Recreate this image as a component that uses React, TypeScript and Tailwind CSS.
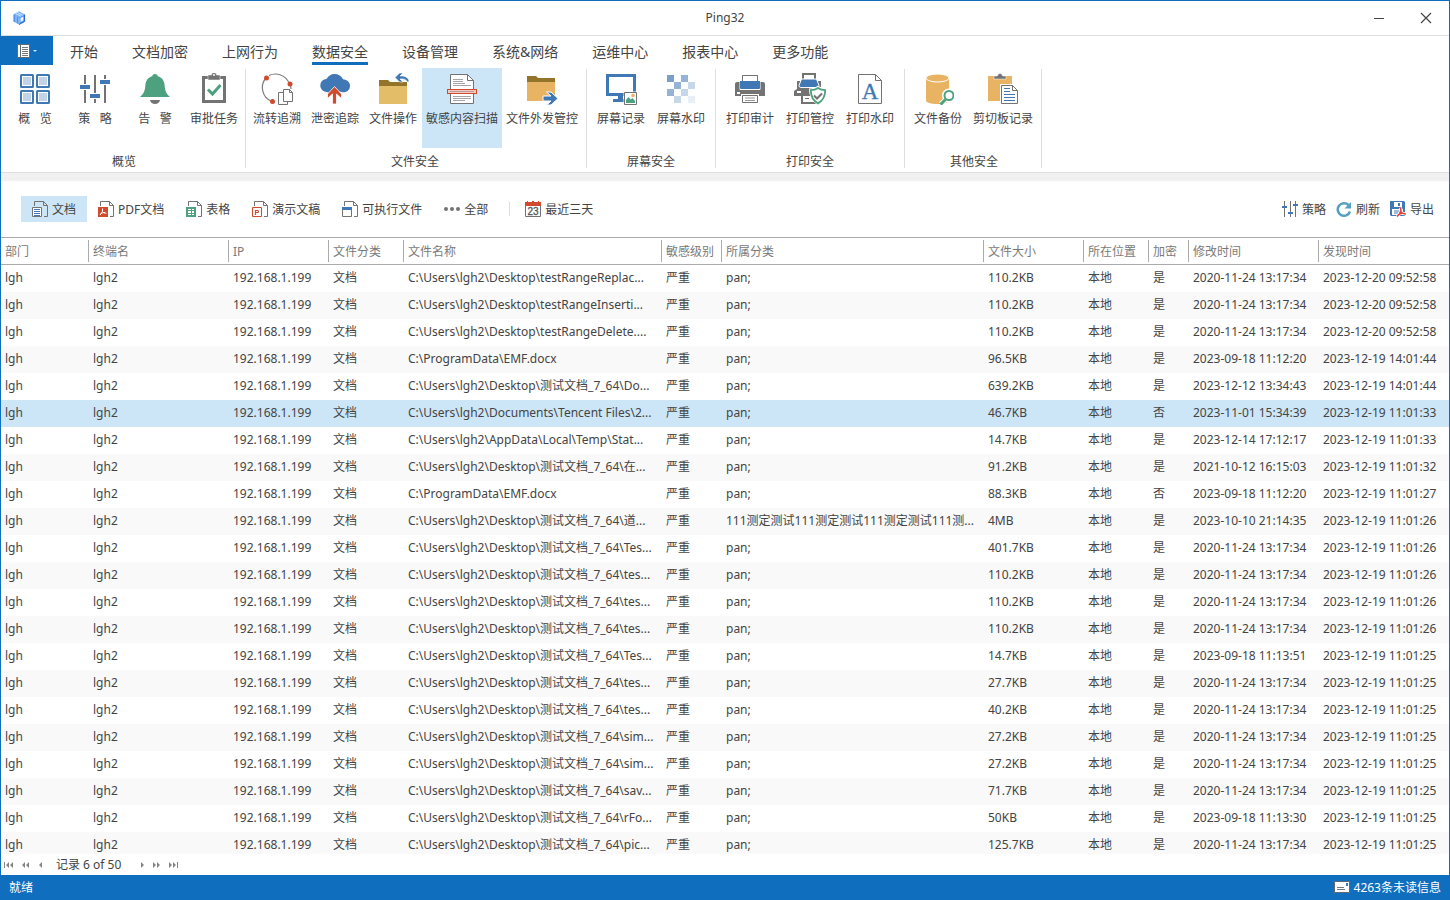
import type { ReactNode } from 'react';

const BLUE = '#3f78b4';
const GRAY = '#737373';
const GREEN = '#4ea17e';
const RED = '#d04a2e';
const SAND = '#e8b464';

/* ---------- ribbon icons, 32x32 ---------- */

const Big = ({ children }: { children: ReactNode }) => (
    <svg viewBox="0 0 32 32" className="size-8 shrink-0" fill="none" aria-hidden="true">{children}</svg>
);

const OverviewIcon = () => (
    <Big>
        {[[1, 1], [17, 1], [1, 17], [17, 17]].map(([x, y]) => (
            <g key={`${x}-${y}`}>
                <rect x={x + 1} y={y + 1} width="12" height="12" rx="0.5" stroke={BLUE} strokeWidth="2" fill="#fff" />
                <rect x={x + 3} y={y + 3} width="8" height="8" fill="#c3d3e6" />
            </g>
        ))}
    </Big>
);

const PolicyIcon = () => (
    <Big>
        <path d="M6 2v28M16 2v28M26 2v28" stroke={GRAY} strokeWidth="2" />
        <path d="M1 11h10v6H1zM11 20h10v6H11zM21 6h10v6H21z" fill="#fff" />
        <path d="M1 12h10v4H1zM11 21h10v4H11zM21 7h10v4H21z" fill={BLUE} />
    </Big>
);

const AlarmIcon = () => (
    <Big>
        <path d="M16 1c1.500 0 2.500.800 2.800 2.200C23.500 4.600 25.300 8 25.600 12c.3 6 2 9 5.400 12H1c3.400-3 5.100-6 5.400-12 .3-4 2.100-7.400 6.800-8.800C13.500 1.800 14.500 1 16 1z" fill={GREEN} />
        <path d="M11 27h10c-.5 2.500-2.500 4-5 4s-4.500-1.500-5-4z" fill={GRAY} />
    </Big>
);

const TaskIcon = () => (
    <Big>
        <path d="M5.500 4.500h21v24h-21z" stroke={GRAY} strokeWidth="3" />
        <path d="M10 2h3.500a2.500 2.500 0 0 1 5 0H22v5H10z" fill={GRAY} stroke="#fff" strokeWidth="0.500" />
        <circle cx="16" cy="2" r="1" fill="#fff" />
        <path d="M10 16.500l4.500 4.500 8-9" stroke={GREEN} strokeWidth="3" />
    </Big>
);

const FlowIcon = () => (
    <Big>
        <path d="M11 28.500A14.800 14.800 0 0 1 5 5M8 2.500A14.800 14.800 0 0 1 28 10M29.500 13q.5 1.500.5 3" stroke="#7d7d7d" strokeWidth="1.200" />
        <circle cx="5.500" cy="5" r="2.500" fill={RED} />
        <circle cx="29" cy="11" r="2.500" fill={RED} />
        <circle cx="11.500" cy="28.500" r="2.500" fill={RED} />
        <path d="M17.500 19.500h9v12h-9z" fill="#fff" stroke={GRAY} />
        <path d="M22.500 16.500h6l3 3v9h-9z" fill="#fff" stroke={GRAY} />
        <path d="M28.500 16.500v3h3" stroke={GRAY} />
    </Big>
);

const CloudIcon = () => (
    <Big>
        <path d="M8 19a6.500 6.500 0 0 1-.5-13C9 3 12 1 15.500 1c4 0 7 2 8.500 5.200 4 .3 7 3 7 6.500 0 3.800-2.800 6.600-6.500 6.600-1.500 0-2.500-.3-3.500-.8-2.500 1.800-8 2.500-13 .5z" fill={BLUE} />
        <path d="M15.500 13.500l7 7.500v4.500l-5-4.500V31h-4V21l-5 4.500V21z" fill={RED} stroke="#fff" strokeWidth="0.800" />
    </Big>
);

const FolderOpIcon = () => (
    <Big>
        <path d="M2 7h9l2 2h17v4H2z" fill="#937428" />
        <path d="M2 13h28v18H2z" fill="#e4bd68" />
        <path d="M26 0h-3.500L18 4.500 22.500 9H26l-3-3c4-.5 6 .5 7.500 3H32c0-4-3.500-6.500-9-6z" fill={BLUE} stroke="#fff" strokeWidth="0.600" />
    </Big>
);

const ScanIcon = () => (
    <Big>
        <path d="M4.500 1.500h17l6 6v23h-23z" fill="#fff" stroke={GRAY} />
        <path d="M21.500 1.500v6h6" stroke={GRAY} />
        <path d="M7 6.500h10M7 8.500h10M7 10.500h12M7 12.500h18M7 23.500h18M7 25.500h18M7 27.500h12" stroke="#a5a5a5" />
        <rect x="1.500" y="16.500" width="29" height="4" fill="#f6c9c2" stroke={RED} />
        <path d="M4 18.500h24" stroke="#b89a98" />
    </Big>
);

const FolderOutIcon = () => (
    <Big>
        <path d="M1 3h9l2 2h17v4H1z" fill="#937428" />
        <path d="M1 9h28v19H1z" fill={SAND} />
        <path d="M17 23h8l-4.500-4h4.500l7 6.500-7 6.500h-4.500l4.500-4h-8z" fill={BLUE} stroke="#fff" strokeWidth="1" />
    </Big>
);

const ScreenIcon = () => (
    <Big>
        <path d="M2.500 2.500h27v19h-27z" fill="#fff" stroke={BLUE} strokeWidth="3" />
        <path d="M13 22h5v4h3v3H8v-3h5z" fill={BLUE} />
        <path d="M18.500 18.500h14v14h-14z" fill="#fff" />
        <path d="M19.500 19.500h12v12h-12z" fill="#fff" stroke={GRAY} />
        <path d="M21 30v-3l2.500-3 2 2.500 2-1.500L30 28v2z" fill={GREEN} />
        <circle cx="28" cy="22.500" r="1.800" fill={SAND} />
    </Big>
);

const MOSAIC = [
    [2, 2, '#7a9fcb'], [16, 2, '#94b3d7'], [9, 9, '#94b3d7'], [23, 9, '#c7d7ea'],
    [2, 16, '#94b3d7'], [16, 16, '#c7d7ea'], [9, 23, '#c7d7ea'], [23, 23, '#e8eff7'],
] as const;

const MosaicIcon = () => (
    <Big>
        {MOSAIC.map(([x, y, fill]) => (
            <rect key={`${x}-${y}`} x={x} y={y} width="7" height="7" fill={fill} />
        ))}
    </Big>
);

const PrintIcon = () => (
    <Big>
        <path d="M8.500 2.500h15v8h-15z" fill="#fff" stroke={GRAY} />
        <path d="M1 11q0-2 2-2h26q2 0 2 2v12H1z" fill={GRAY} />
        <path d="M5.500 7h21v9q0 1-1 1h-19q-1 0-1-1z" fill="#fff" />
        <path d="M8.500 9V2.500h15V9" fill="#fff" stroke={GRAY} />
        <path d="M6 8h20v7q0 1-1 1H7q-1 0-1-1z" fill={BLUE} />
        <rect x="3" y="19" width="3" height="2" fill="#fff" />
        <path d="M7 21h18v9H7z" fill="#fff" />
        <path d="M8.500 22.500h15v7h-15z" fill="#fff" stroke={GRAY} />
        <path d="M11 25h10M11 27.500h10" stroke="#9a9a9a" />
    </Big>
);

const PrintGuardIcon = () => (
    <Big>
        <path d="M9 1h12v8H9z" fill="#fff" stroke={GRAY} strokeWidth="2" />
        <path d="M0 18l3-2V8h24v8l3 2v5H0z" fill={GRAY} />
        <path d="M5 12.500L7.500 6h15l2.500 6.500q0 2-2 2H7q-2 0-2-2z" fill={BLUE} stroke="#fff" />
        <rect x="3" y="18" width="4" height="2" fill="#fff" />
        <path d="M8 22h14v8H8z" fill="#fff" stroke={GRAY} strokeWidth="2" />
        <path d="M11 25.500h4" stroke={GRAY} />
        <path d="M24 12.500c2.500 2 5.500 3 9 3 0 8-3 13.500-9 16.500-6-3-9-8.500-9-16.500 3.500 0 6.500-1 9-3z" fill="#fff" />
        <path d="M24 15c2 1.500 4.500 2.200 7.200 2.200 0 6-2.500 10.500-7.200 13.200-4.700-2.700-7.200-7.200-7.200-13.200C19.500 17.200 22 16.500 24 15z" stroke={GREEN} strokeWidth="1.800" />
        <path d="M20 22.500l3 3 5-5" stroke={GRAY} strokeWidth="2" />
    </Big>
);

const PrintMarkIcon = () => (
    <Big>
        <path d="M4.500 1.500h17l6 6v23h-23z" fill="#fff" stroke={GRAY} />
        <path d="M21.500 1.500v6h6" stroke={GRAY} />
        <text x="16" y="26" textAnchor="middle" fontSize="23" fontFamily="Liberation Serif, serif" fill={BLUE} stroke={BLUE} strokeWidth="0.300">A</text>
    </Big>
);

const BackupIcon = () => (
    <Big>
        <path d="M4 5.500v22c0 2 5 3.500 11.500 3.500S27 29.500 27 27.500v-22z" fill={SAND} />
        <ellipse cx="15.500" cy="5" rx="11.500" ry="4" fill={SAND} stroke="#fff" />
        <path d="M19 31l5-5" stroke="#fff" strokeWidth="5" />
        <circle cx="27" cy="22.500" r="5" fill="#fff" stroke="#fff" strokeWidth="4" />
        <circle cx="27" cy="22.500" r="4.500" fill="#fff" stroke={GREEN} strokeWidth="2" />
        <path d="M18.500 31.500l5-5" stroke={GREEN} strokeWidth="3" />
    </Big>
);

const PasteIcon = () => (
    <Big>
        <path d="M1 3h24v25H1z" fill={SAND} />
        <path d="M7 3h3.500a2.500 2.500 0 0 1 5 0H19v3H7z" fill={GRAY} stroke="#fff" strokeWidth="0.500" />
        <path d="M13 11h13l6 6v15H13z" fill="#fff" />
        <path d="M14.500 12.500h11l5 5v13h-16z" fill="#fff" stroke={GRAY} />
        <path d="M25.500 12.500v5h5" stroke={GRAY} />
        <path d="M17 15.500h6M17 18.500h6M17 21.500h11M17 24.500h11M17 27.500h11" stroke={BLUE} />
    </Big>
);

/* ---------- small toolbar icons, 16x16 ---------- */

const Small = ({ children }: { children: ReactNode }) => (
    <svg viewBox="0 0 16 16" className="size-4 shrink-0" fill="none" aria-hidden="true">{children}</svg>
);

const PageOutline = () => (
    <>
        <path d="M2.500 5V.500h9l4 4v11H12" stroke={GRAY} />
        <path d="M11.500.500v4h4" stroke={GRAY} />
    </>
);

const DocIcon = () => (
    <Small>
        <PageOutline />
        <path d="M.5 6.500h9v9h-9z" fill="#fff" stroke={GRAY} />
        <path d="M2 8.500h6M2 10.500h6M2 12.500h6M2 14.500h6" stroke={BLUE} />
    </Small>
);

const PdfIcon = () => (
    <Small>
        <PageOutline />
        <path d="M0 6h10v10H0z" fill={RED} />
        <path d="M4.500 7.500v3L2 14M4.500 10.500c1 1.500 2.500 2 4 1.500M2.500 13c1-1 3-1.500 4.500-1.500" stroke="#fff" />
    </Small>
);

const SheetIcon = () => (
    <Small>
        <PageOutline />
        <path d="M0 6h10v10H0z" fill={GREEN} />
        <path d="M2 8h3v1H2zM6 8h2v1H6zM2 10h3v2H2zM6 10h2v2H6zM2 13h3v1H2zM6 13h2v1H6z" fill="#fff" />
    </Small>
);

const SlideIcon = () => (
    <Small>
        <PageOutline />
        <path d="M.5 6.500h9v9h-9z" fill="#fff" stroke={RED} />
        <path d="M3.500 14V9.500h2q1 0 1 1t-1 1h-2" stroke={RED} strokeWidth="1.200" />
    </Small>
);

const ExeIcon = () => (
    <Small>
        <PageOutline />
        <path d="M.5 7.500h9v8h-9z" fill="#fff" stroke={GRAY} />
        <path d="M0 6h10v3H0z" fill={BLUE} />
    </Small>
);

const DotsIcon = () => (
    <Small>
        {[2, 8, 14].map((x) => <circle key={x} cx={x} cy="8" r="2" fill={GRAY} />)}
    </Small>
);

const CalendarIcon = () => (
    <Small>
        <path d="M.5 4v11.500h15V4" fill="#fff" stroke={GRAY} />
        <path d="M0 1h2V0h1v1h4V0h2v1h4V0h1v1h2v4H0z" fill={RED} />
        <text x="8" y="14" textAnchor="middle" fontSize="10" fontFamily="Liberation Sans, sans-serif" fill="#555" stroke="#555" strokeWidth="0.300">23</text>
    </Small>
);

const SmallPolicyIcon = () => (
    <Small>
        <path d="M2.500 0v16M8.500 0v16M13.500 0v16" stroke={GRAY} />
        <path d="M0 5h5v2H0zM6 11h5v2H6zM11 3h5v2h-5z" fill={BLUE} />
    </Small>
);

const RefreshIcon = () => (
    <Small>
        <path d="M14 10.500A6.300 6.300 0 1 1 12.500 4" stroke="#55a0c0" strokeWidth="2.500" />
        <path d="M15 1v6.500H8.500z" fill="#55a0c0" />
    </Small>
);

const ExportIcon = () => (
    <Small>
        <path d="M0 0h14l1 1v14H1l-1-1z" fill={BLUE} />
        <path d="M4 1h8v5H4zM2 8h11v6H2z" fill="#fff" />
        <path d="M8 2h2v3H8z" fill={BLUE} />
        <path d="M4 10h5M4 12h4" stroke={BLUE} />
        <path d="M10.500 6.500c1 3 0 6-3.500 9M10.500 10c1 2 3 3 5.500 3M8 14c2-1.500 4-2 6-1.500" stroke="#fff" strokeWidth="3" />
        <path d="M10.500 6.500c1 3 0 6-3.500 9M10.500 10c1 2 3 3 5.500 3M8 14c2-1.500 4-2 6-1.500" stroke="#e8423a" strokeWidth="1.500" />
    </Small>
);

/* ---------- data ---------- */

const tabs = ['开始', '文档加密', '上网行为', '数据安全', '设备管理', '系统&网络', '运维中心', '报表中心', '更多功能'];

type RibbonItem = { label: string; icon: ReactNode; width: string; active?: boolean };

const ribbon: { title: string; pad: string; items: RibbonItem[] }[] = [
    {
        title: '概览', pad: 'pl-1 pr-0.5', items: [
            { label: '概   览', icon: <OverviewIcon />, width: 'w-[60px]' },
            { label: '策   略', icon: <PolicyIcon />, width: 'w-[60px]' },
            { label: '告   警', icon: <AlarmIcon />, width: 'w-[60px]' },
            { label: '审批任务', icon: <TaskIcon />, width: 'w-[58px]' },
        ],
    },
    {
        title: '文件安全', pad: 'pl-0.5 pr-1', items: [
            { label: '流转追溯', icon: <FlowIcon />, width: 'w-[58px]' },
            { label: '泄密追踪', icon: <CloudIcon />, width: 'w-[58px]' },
            { label: '文件操作', icon: <FolderOpIcon />, width: 'w-[58px]' },
            { label: '敏感内容扫描', icon: <ScanIcon />, width: 'w-[80px]', active: true },
            { label: '文件外发管控', icon: <FolderOutIcon />, width: 'w-[80px]' },
        ],
    },
    {
        title: '屏幕安全', pad: 'px-1', items: [
            { label: '屏幕记录', icon: <ScreenIcon />, width: 'w-[60px]' },
            { label: '屏幕水印', icon: <MosaicIcon />, width: 'w-[60px]' },
        ],
    },
    {
        title: '打印安全', pad: 'px-1', items: [
            { label: '打印审计', icon: <PrintIcon />, width: 'w-[60px]' },
            { label: '打印管控', icon: <PrintGuardIcon />, width: 'w-[60px]' },
            { label: '打印水印', icon: <PrintMarkIcon />, width: 'w-[60px]' },
        ],
    },
    {
        title: '其他安全', pad: 'pl-1 pr-0.5', items: [
            { label: '文件备份', icon: <BackupIcon />, width: 'w-[58px]' },
            { label: '剪切板记录', icon: <PasteIcon />, width: 'w-[72px]' },
        ],
    },
];

const filters = [
    { label: '文档', icon: <DocIcon />, active: true },
    { label: 'PDF文档', icon: <PdfIcon /> },
    { label: '表格', icon: <SheetIcon /> },
    { label: '演示文稿', icon: <SlideIcon /> },
    { label: '可执行文件', icon: <ExeIcon /> },
    { label: '全部', icon: <DotsIcon /> },
];

const actions = [
    { label: '策略', icon: <SmallPolicyIcon /> },
    { label: '刷新', icon: <RefreshIcon /> },
    { label: '导出', icon: <ExportIcon /> },
];

const columns = [
    { name: '部门', width: 'w-[88px]' },
    { name: '终端名', width: 'w-[140px]' },
    { name: 'IP', width: 'w-[100px]' },
    { name: '文件分类', width: 'w-[75px]' },
    { name: '文件名称', width: 'w-[258px]' },
    { name: '敏感级别', width: 'w-[60px]' },
    { name: '所属分类', width: 'w-[262px]' },
    { name: '文件大小', width: 'w-[100px]' },
    { name: '所在位置', width: 'w-[65px]' },
    { name: '加密', width: 'w-[40px]' },
    { name: '修改时间', width: 'w-[130px]' },
    { name: '发现时间', width: 'w-[130px]' },
];

const SELECTED = 5;
const desk = 'C:\\Users\\lgh2\\Desktop\\';
const testDir = desk + '测试文档_7_64\\';
const longClass = '111测定测试111测定测试111测定测试111测...';

// file name, class, size, encrypted, modified, found
const rows = [
    [desk + 'testRangeReplac...', 'pan;', '110.2KB', '是', '2020-11-24 13:17:34', '2023-12-20 09:52:58'],
    [desk + 'testRangeInserti...', 'pan;', '110.2KB', '是', '2020-11-24 13:17:34', '2023-12-20 09:52:58'],
    [desk + 'testRangeDelete....', 'pan;', '110.2KB', '是', '2020-11-24 13:17:34', '2023-12-20 09:52:58'],
    ['C:\\ProgramData\\EMF.docx', 'pan;', '96.5KB', '是', '2023-09-18 11:12:20', '2023-12-19 14:01:44'],
    [testDir + 'Do...', 'pan;', '639.2KB', '是', '2023-12-12 13:34:43', '2023-12-19 14:01:44'],
    ['C:\\Users\\lgh2\\Documents\\Tencent Files\\2...', 'pan;', '46.7KB', '否', '2023-11-01 15:34:39', '2023-12-19 11:01:33'],
    ['C:\\Users\\lgh2\\AppData\\Local\\Temp\\Stat...', 'pan;', '14.7KB', '是', '2023-12-14 17:12:17', '2023-12-19 11:01:33'],
    [testDir + '在...', 'pan;', '91.2KB', '是', '2021-10-12 16:15:03', '2023-12-19 11:01:32'],
    ['C:\\ProgramData\\EMF.docx', 'pan;', '88.3KB', '否', '2023-09-18 11:12:20', '2023-12-19 11:01:27'],
    [testDir + '道...', longClass, '4MB', '是', '2023-10-10 21:14:35', '2023-12-19 11:01:26'],
    [testDir + 'Tes...', 'pan;', '401.7KB', '是', '2020-11-24 13:17:34', '2023-12-19 11:01:26'],
    [testDir + 'tes...', 'pan;', '110.2KB', '是', '2020-11-24 13:17:34', '2023-12-19 11:01:26'],
    [testDir + 'tes...', 'pan;', '110.2KB', '是', '2020-11-24 13:17:34', '2023-12-19 11:01:26'],
    [testDir + 'tes...', 'pan;', '110.2KB', '是', '2020-11-24 13:17:34', '2023-12-19 11:01:26'],
    [testDir + 'Tes...', 'pan;', '14.7KB', '是', '2023-09-18 11:13:51', '2023-12-19 11:01:25'],
    [testDir + 'tes...', 'pan;', '27.7KB', '是', '2020-11-24 13:17:34', '2023-12-19 11:01:25'],
    [testDir + 'tes...', 'pan;', '40.2KB', '是', '2020-11-24 13:17:34', '2023-12-19 11:01:25'],
    [testDir + 'sim...', 'pan;', '27.2KB', '是', '2020-11-24 13:17:34', '2023-12-19 11:01:25'],
    [testDir + 'sim...', 'pan;', '27.2KB', '是', '2020-11-24 13:17:34', '2023-12-19 11:01:25'],
    [testDir + 'sav...', 'pan;', '71.7KB', '是', '2020-11-24 13:17:34', '2023-12-19 11:01:25'],
    [testDir + 'rFo...', 'pan;', '50KB', '是', '2023-09-18 11:13:30', '2023-12-19 11:01:25'],
    [testDir + 'pic...', 'pan;', '125.7KB', '是', '2020-11-24 13:17:34', '2023-12-19 11:01:25'],
];

/* ---------- layout ---------- */

const TitleBar = () => (
    <header className="h-[35px] shrink-0 grid grid-cols-3 items-center border-b border-[#dedede]">
        <svg viewBox="0 0 14 14" className="size-3.5 ml-[11px]" aria-hidden="true">
            <path d="M7 .5l5.600 3v7L7 13.500 1.400 10.500v-7z" fill="#4a94f0" />
            <path d="M7 .5l5.600 3L7 6.500 1.400 3.500z" fill="#7db6f8" />
            <path d="M3.500 2.400l5.600 3M5.300 1.400l5.600 3M4 5v7M7 6.500v7" stroke="#fff" strokeWidth="0.600" />
            <path d="M8.500 7l2.800-1.500v4L8.500 11z" fill="#eef5ff" />
            <path d="M12.600 3.500v7L7 13.500" stroke="#1f5fc0" fill="none" />
        </svg>
        <h1 className="text-center">Ping32</h1>
        <div className="flex justify-end">
            <button type="button" aria-label="最小化" className="w-12 h-8 flex items-center justify-center">
                <svg viewBox="0 0 12 12" className="size-3"><path d="M1 6.500h10" stroke="#444" /></svg>
            </button>
            <button type="button" aria-label="关闭" className="w-[46px] h-8 flex items-center justify-center">
                <svg viewBox="0 0 12 12" className="size-3"><path d="M1 1l10 10M11 1L1 11" stroke="#444" strokeWidth="1.200" /></svg>
            </button>
        </div>
    </header>
);

const TabBar = () => (
    <nav className="flex h-[29px] shrink-0 items-stretch">
        <button type="button" aria-label="文件菜单" className="w-[52px] flex items-center justify-center bg-[#106ebe]">
            <svg viewBox="0 0 22 16" className="w-[22px] h-4" fill="none">
                <path d="M1.500 1.500h12v13h-12z" fill="#fff" stroke="#5f6b75" />
                <path d="M4.500 1v14" stroke="#5f6b75" />
                <path d="M6 4.500h6M6 6.500h6M6 8.500h6M6 10.500h6M6 12.500h6" stroke="#777" />
                <path d="M17 7h4l-2 2z" fill="#d5e5f5" />
            </svg>
        </button>
        {tabs.map((tab) => (
            <button key={tab} type="button" className="px-[17px] text-sm flex">
                <span className={`h-full pt-1.5 border-b-3 ${tab === '数据安全' ? 'border-[#106ebe]' : 'border-transparent'}`}>
                    {tab}
                </span>
            </button>
        ))}
    </nav>
);

const Ribbon = () => (
    <div className="flex shrink-0 border-b border-[#dedede] h-[108px]">
        {ribbon.map((group) => (
            <section key={group.title} className={`flex flex-col my-1 border-r border-[#dedede] ${group.pad}`}>
                <div className="flex -mt-px">
                    {group.items.map((item) => (
                        <button key={item.label} type="button"
                            className={`h-20 flex flex-col items-center pt-[5px] gap-1.5 ${item.width} ${item.active ? 'bg-[#cde6f7]' : 'hover:bg-[#e6f2fa]'}`}>
                            {item.icon}
                            <span className="whitespace-pre leading-4">{item.label}</span>
                        </button>
                    ))}
                </div>
                <h2 className="text-center leading-3 mt-auto">{group.title}</h2>
            </section>
        ))}
    </div>
);

const Toolbar = () => (
    <div className="h-14 shrink-0 flex items-center pl-5 pr-[15px]">
        {filters.map((f) => (
            <button key={f.label} type="button"
                className={`h-[26px] px-[11px] flex items-center gap-1 ${f.active ? 'bg-[#cde6f7]' : ''}`}>
                {f.icon}
                <span className="pt-0.5">{f.label}</span>
            </button>
        ))}
        <div className="w-px h-3.5 bg-[#dedede] ml-2.5 mr-[15px]" />
        <button type="button" className="h-[26px] flex items-center gap-1">
            <CalendarIcon />
            <span className="pt-0.5">最近三天</span>
        </button>
        <div className="ml-auto flex items-center gap-2.5">
            {actions.map((a) => (
                <button key={a.label} type="button" className="h-[26px] flex items-center gap-1">
                    {a.icon}
                    <span className="pt-0.5">{a.label}</span>
                </button>
            ))}
        </div>
    </div>
);

const RecordTable = () => (
    <main className="flex-1 min-h-0 overflow-hidden">
        <table className="w-full table-fixed border-separate border-spacing-0 text-left">
            <thead>
                <tr className="h-7 text-[#7a7a7a]">
                    {columns.map((col, i) => (
                        <th key={col.name} className={`${col.width} p-0 font-normal border-y border-[#ababab]`}>
                            <div className={`h-[22px] leading-6 pl-1 truncate ${i < columns.length - 1 ? 'border-r border-[#ababab]' : ''}`}>
                                {col.name}
                            </div>
                        </th>
                    ))}
                </tr>
            </thead>
            <tbody>
                {rows.map(([file, cls, size, enc, modified, found], i) => (
                    <tr key={i} className={`h-[27px] ${i === SELECTED ? 'bg-[#cde6f7]' : i % 2 ? 'bg-[#f9f9f9]' : 'bg-white'}`}>
                        {['lgh', 'lgh2', '192.168.1.199', '文档', file, '严重', cls, size, '本地', enc, modified, found].map((cell, c) => (
                            <td key={c} className="p-0 pl-1 pb-0.5 whitespace-nowrap overflow-hidden">{cell}</td>
                        ))}
                    </tr>
                ))}
            </tbody>
        </table>
    </main>
);

const PagerButton = ({ label, d, w }: { label: string; d: string; w: number }) => (
    <button type="button" aria-label={label} className="h-4 flex items-center">
        <svg width={w} height="8" viewBox={`0 0 ${w} 8`} fill="#858585"><path d={d} /></svg>
    </button>
);

const Pager = () => (
    <div className="h-[21px] shrink-0 flex items-center pl-[3px]">
        <div className="flex items-center gap-2">
            <PagerButton label="第一条" w={10} d="M0 1h1v6H0zM5 1v6L2 4zM9 1v6L6 4z" />
            <PagerButton label="上一页" w={8} d="M3 1v6L0 4zM7 1v6L4 4z" />
            <PagerButton label="上一条" w={6} d="M4 1v6L1 4z" />
        </div>
        <span className="ml-3 mr-[18px]">记录 6 of 50</span>
        <div className="flex items-center gap-2">
            <PagerButton label="下一条" w={6} d="M2 1v6l3-3z" />
            <PagerButton label="下一页" w={8} d="M0 1v6l3-3zM4 1v6l3-3z" />
            <PagerButton label="最后一条" w={10} d="M0 1v6l3-3zM4 1v6l3-3zM8 1h1v6H8z" />
        </div>
    </div>
);

const StatusBar = () => (
    <footer className="h-6 shrink-0 flex items-center justify-between bg-[#106ebe] text-white px-2">
        <span className="pt-0.5">就绪</span>
        <button type="button" className="flex items-center gap-1">
            <svg viewBox="0 0 16 12" className="w-4 h-3" aria-hidden="true">
                <path d="M.5.500h15v11H.500z" fill="#fff" stroke="#5f6b75" />
                <path d="M3 6.500h7M3 8.500h8" stroke="#777" />
                <path d="M12 2h2v3h-2z" fill={BLUE} />
            </svg>
            <span className="pt-0.5">4263条未读信息</span>
        </button>
    </footer>
);

const App = () => {
    return (
        <div className="h-screen flex flex-col overflow-hidden border border-[#106ebe] bg-white text-xs text-[#444] font-['Noto_Sans','Noto_Sans_CJK_SC',sans-serif]">
            <TitleBar />
            <TabBar />
            <Ribbon />
            <div className="h-2 shrink-0 bg-[#f1f1f1]" />
            <Toolbar />
            <RecordTable />
            <Pager />
            <StatusBar />
        </div>
    );
};

export default App;
